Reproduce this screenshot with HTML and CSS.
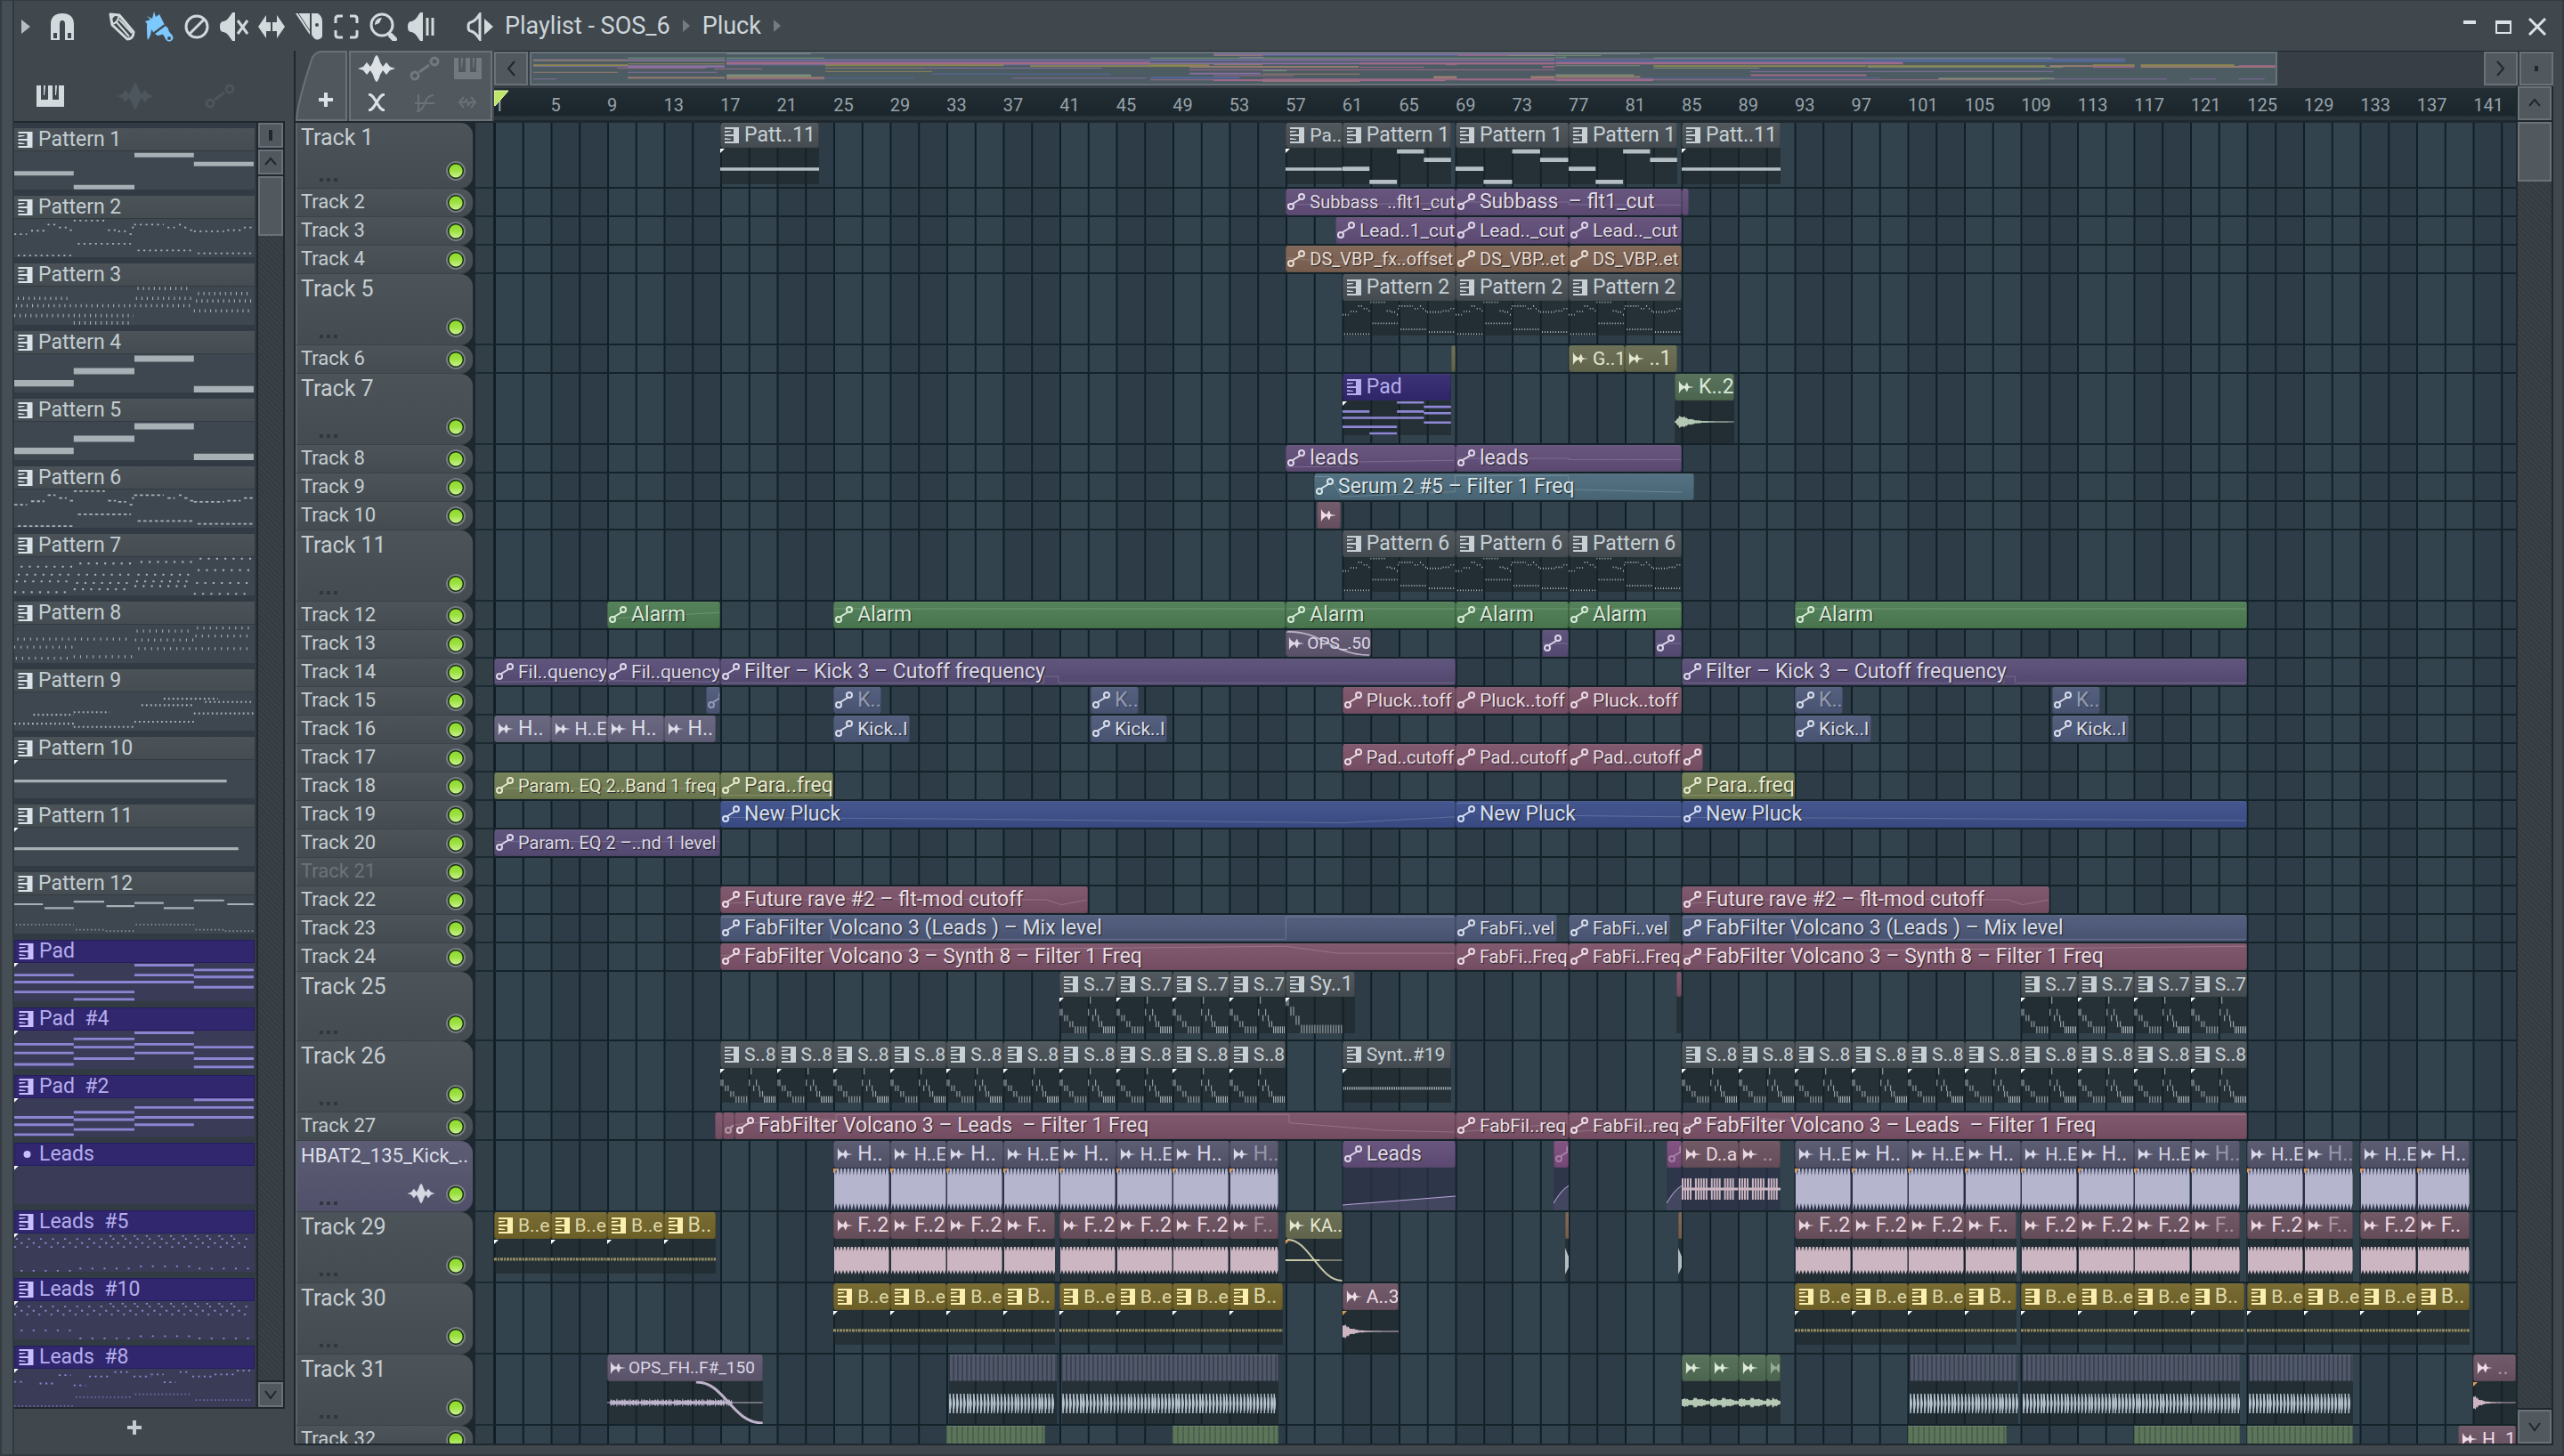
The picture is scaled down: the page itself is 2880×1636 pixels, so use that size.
FILE: index.html
```html
<!DOCTYPE html>
<html lang="en">
<head>
<meta charset="utf-8">
<title>Playlist - SOS_6</title>
<meta name="viewport" content="width=device-width, initial-scale=1">
<link rel="stylesheet" href="styles.css">
</head>
<body>
<svg class="symbols" aria-hidden="true">
  <symbol id="i-pattern" viewBox="0 0 16 18"><path d="M0 0H16V18H0V16H10V10H0V8H10V2H0ZM0 4H7V5L0 6ZM0 14H7V13L0 12Z"/></symbol>
  <symbol id="i-auto" viewBox="0 0 20 20"><g fill="none" stroke="currentColor" stroke-width="2"><circle cx="4" cy="15" r="3"/><circle cx="16" cy="4" r="3"/><path d="M6 12L14 7"/></g></symbol>
  <symbol id="i-audio" viewBox="0 0 20 18"><path d="M1 1Q3 6 8 8L11 3L13 8L20 9L13 10L11 15L8 10Q3 12 1 17Z"/></symbol>
  <symbol id="i-dot" viewBox="0 0 16 18"><circle cx="9" cy="9" r="4"/></symbol>
  <symbol id="i-wave" viewBox="0 0 42 30"><path d="M0 15L6 13L10 8L14 13L17 8C18 4 20 0 21 0S24 4 25 8L28 13L32 8L36 13L42 15L36 17L32 22L28 17L25 22C24 26 22 30 21 30S18 26 17 22L14 17L10 22L6 17Z"/></symbol>
  <symbol id="i-node" viewBox="0 0 34 28"><g fill="none" stroke="currentColor" stroke-width="3"><circle cx="6" cy="22" r="4"/><circle cx="28" cy="6" r="4"/></g><path d="M11 18L22 10" stroke="currentColor" stroke-width="3"/></symbol>
  <symbol id="i-piano" viewBox="0 0 31 24"><path d="M0 0H5V16H13V0H18V16H25V0H31V24H0ZM8 0H10L9 11H8ZM21 0H23L22 11H21Z"/></symbol>
  <symbol id="i-up" viewBox="0 0 20 20"><path d="M4 13L10 6L16 13" fill="none" stroke="currentColor" stroke-width="2"/></symbol>
  <symbol id="i-down" viewBox="0 0 20 20"><path d="M4 6L10 14L16 6" fill="none" stroke="currentColor" stroke-width="2"/></symbol>
</svg>

<div class="window">
  <header class="titlebar">
    <button class="tool tool-menu" aria-label="Menu"><svg width="10" height="16" viewBox="0 0 10 16"><path d="M0 0L10 8L0 16Z" fill="currentColor"/></svg></button>
    <button class="tool tool-snap" aria-label="Snap"><svg width="28" height="30" viewBox="0 0 28 30"><path d="M1 30V12C1 4 6 0 14 0S27 4 27 12V30H17V13C17 9 16 8 14 8S11 9 11 13V30Z" fill="currentColor"/><path d="M4 22H8V28H4ZM20 22H24V28H20Z" fill="#40484e"/></svg></button>
    <button class="tool" aria-label="Draw"><svg width="30" height="32" viewBox="0 0 30 32"><g fill="none" stroke="currentColor" stroke-width="3" stroke-linejoin="round"><path d="M2 2L12 3L28 22C28 27 25 30 21 30L4 14Z"/><path d="M4 13C9 12 11 9 12 3M9 11L23 27M12 8L26 23" stroke-width="2"/></g><path d="M2 2L8 3L3 8Z" fill="currentColor"/></svg></button>
    <button class="tool tool-active" aria-label="Paint"><svg width="32" height="34" viewBox="0 0 32 34"><path d="M10 0L12 6L16 3L22 15L10 24L0 11L6 9L2 5L8 8ZM11 25L23 16L26 19C26 22 28 24 30 26C34 31 29 35 25 33C22 31 22 27 20 26C18 25 17 27 14 27ZM2 14L7 19C7 24 6 28 3 32C2 28 2 20 2 14Z" fill="currentColor"/><circle cx="27" cy="30" r="2" fill="#40484e"/><path d="M10 24L22 15" stroke="#40484e" stroke-width="2"/></svg></button>
    <button class="tool" aria-label="Delete"><svg width="28" height="28" viewBox="0 0 28 28"><g fill="none" stroke="currentColor" stroke-width="3"><circle cx="14" cy="14" r="12"/><path d="M6 22L22 6"/></g></svg></button>
    <button class="tool" aria-label="Mute"><svg width="32" height="32" viewBox="0 0 32 32"><path d="M0 16C0 13 1 10 4 10C9 9 11 4 14 0H17V32H14C11 28 9 23 4 22C1 22 0 19 0 16Z" fill="currentColor"/><path d="M20 9L31 24M31 9L20 24" stroke="currentColor" stroke-width="3"/></svg></button>
    <button class="tool" aria-label="Slip"><svg width="30" height="26" viewBox="0 0 30 26"><path d="M0 13L9 0V8H14V18H9V26ZM30 13L21 0V8H16V18H21V26Z" fill="currentColor"/></svg></button>
    <button class="tool" aria-label="Slice"><svg width="30" height="30" viewBox="0 0 30 30"><path d="M0 0H16V24ZM18 0H25C28 2 30 5 30 9V26C28 30 23 31 20 27L18 24Z" fill="currentColor"/><path d="M3 0L17 21" stroke="#40484e" stroke-width="1"/><circle cx="24" cy="13" r="2" fill="#40484e"/></svg></button>
    <button class="tool" aria-label="Select"><svg width="28" height="28" viewBox="0 0 28 28"><path d="M2 10V5Q2 2 5 2H10M18 2H23Q26 2 26 5V10M26 18V23Q26 26 23 26H18M10 26H5Q2 26 2 23V18" fill="none" stroke="currentColor" stroke-width="3"/></svg></button>
    <button class="tool" aria-label="Zoom"><svg width="32" height="32" viewBox="0 0 32 32"><circle cx="14" cy="14" r="12" fill="none" stroke="currentColor" stroke-width="3"/><path d="M6 14C6 9 9 6 14 6L11 12Z" fill="currentColor"/><path d="M24 26L28 30" stroke="currentColor" stroke-width="6" stroke-linecap="round"/></svg></button>
    <button class="tool" aria-label="Playback"><svg width="30" height="32" viewBox="0 0 30 32"><path d="M0 16C0 13 1 10 4 10C9 9 11 4 14 0H17V32H14C11 28 9 23 4 22C1 22 0 19 0 16Z" fill="currentColor"/><path d="M22 6V26M28 6V26" stroke="currentColor" stroke-width="3"/></svg></button>
    <button class="tool tool-out" aria-label="Audition"><svg width="30" height="32" viewBox="0 0 30 32"><path d="M2 16C2 12 3 11 5 11C10 10 12 6 15 2V30C12 26 10 22 5 21C3 21 2 20 2 16Z" fill="none" stroke="currentColor" stroke-width="3"/><path d="M20 7L30 16L20 25Z" fill="currentColor"/></svg></button>
    <nav class="crumbs" aria-label="Location">
      <a href="#playlist">Playlist - SOS_6</a><i class="crumb-sep"></i><a href="#pluck">Pluck</a><i class="crumb-sep"></i>
    </nav>
    <div class="window-controls">
      <button class="win" aria-label="Minimize"><svg width="20" height="20" viewBox="0 0 20 20"><path d="M3 3H17V7H3Z" fill="currentColor"/></svg></button>
      <button class="win" aria-label="Maximize"><svg width="20" height="20" viewBox="0 0 20 20"><path d="M1 3H19V18H1ZM3 7V16H17V7Z" fill="currentColor" fill-rule="evenodd"/></svg></button>
      <button class="win" aria-label="Close"><svg width="20" height="20" viewBox="0 0 20 20"><path d="M1 1L19 19M19 1L1 19" stroke="currentColor" stroke-width="3"/></svg></button>
    </div>
  </header>

  <main class="workspace" id="playlist">
    <aside class="picker">
      <div class="picker-tabs">
        <button class="picker-tab is-on" aria-label="Patterns"><svg width="31" height="24"><use href="#i-piano"/></svg></button>
        <button class="picker-tab" aria-label="Audio clips"><svg width="42" height="30"><use href="#i-wave"/></svg></button>
        <button class="picker-tab" aria-label="Automation"><svg width="34" height="28"><use href="#i-node"/></svg></button>
      </div>
      <div class="picker-box">
        <ul class="pattern-list" id="patterns"></ul>
        <div class="scroll">
          <button class="scroll-btn scroll-mark" aria-label="Resize"></button>
          <button class="scroll-btn" aria-label="Scroll up"><svg width="20" height="20"><use href="#i-up"/></svg></button>
          <div class="scroll-track"><div class="scroll-thumb"></div></div>
          <button class="scroll-btn" aria-label="Scroll down"><svg width="20" height="20"><use href="#i-down"/></svg></button>
        </div>
      </div>
      <button class="picker-add" aria-label="Add pattern"><svg width="16" height="16" viewBox="0 0 16 16"><path d="M6 0H10V6H16V10H10V16H6V10H0V6H6Z" fill="currentColor"/></svg></button>
    </aside>

    <section class="playlist">
      <div class="corner">
        <div class="add-tab">
          <svg class="add-shape" viewBox="0 0 58 78" preserveAspectRatio="none"><path d="M1 77C2 60 12 28 18 10Q21 1 30 1H57V77Z" fill="#50585e" stroke="#6a7278" stroke-width="2"/></svg>
          <button class="add-track" aria-label="Add track"><svg width="16" height="16" viewBox="0 0 16 16"><path d="M6 0H10V6H16V10H10V16H6V10H0V6H6Z" fill="currentColor"/></svg></button>
        </div>
        <div class="modes">
          <button class="mode is-on" aria-label="Audio"><svg width="42" height="30"><use href="#i-wave"/></svg></button>
          <button class="mode" aria-label="Automation"><svg width="34" height="28"><use href="#i-node"/></svg></button>
          <button class="mode" aria-label="Patterns"><svg width="31" height="24"><use href="#i-piano"/></svg></button>
          <button class="mode is-on" aria-label="Crossfade"><svg width="20" height="20" viewBox="0 0 20 20"><path d="M1 1C5 1 7 5 10 10S15 19 19 19M19 1C15 1 13 5 10 10S5 19 1 19" fill="none" stroke="currentColor" stroke-width="3"/></svg></button>
          <button class="mode faint" aria-label="Curve"><svg width="22" height="22" viewBox="0 0 22 22"><path d="M4 2V22M0 12H22M2 21C14 20 8 4 21 3" fill="none" stroke="currentColor" stroke-width="2"/></svg></button>
          <button class="mode faint" aria-label="Stretch"><svg width="22" height="16" viewBox="0 0 22 16"><path d="M7 2L2 8L7 14M15 2L20 8L15 14M4 8H8L10 5L12 11L14 8H18" fill="none" stroke="currentColor" stroke-width="2"/></svg></button>
        </div>
      </div>

      <div class="overview">
        <button class="scroll-btn nav-btn" aria-label="Scroll left"><svg width="12" height="20" viewBox="0 0 12 20"><path d="M10 2L3 10L10 18" fill="none" stroke="currentColor" stroke-width="2"/></svg></button>
        <div class="overview-track"><svg class="minimap" id="minimap" viewBox="0 0 1958 36" preserveAspectRatio="none"></svg><div class="overview-rest"></div></div>
        <button class="scroll-btn nav-btn" aria-label="Scroll right"><svg width="12" height="20" viewBox="0 0 12 20"><path d="M2 2L9 10L2 18" fill="none" stroke="currentColor" stroke-width="2"/></svg></button>
        <button class="scroll-btn nav-btn scroll-mark small" aria-label="Resize"></button>
      </div>
      <div class="ruler" id="ruler"></div>

      <div class="tracks" id="tracks"></div>

      <div class="scroll scroll-main">
        <button class="scroll-btn" aria-label="Scroll up"><svg width="20" height="20"><use href="#i-up"/></svg></button>
        <div class="scroll-track"><div class="scroll-thumb"></div></div>
        <button class="scroll-btn" aria-label="Scroll down"><svg width="20" height="20"><use href="#i-down"/></svg></button>
      </div>
    </section>
  </main>
</div>
<script src="script.js"></script>
</body>
</html>
```

FILE: styles.css
```css
:root {
  --panel: #40484e;
  --edge: #1f282e;
  --btn: #51595f;
  --btn-edge: #6a7278;
  --text: #cdd5d9;
}
* { box-sizing: border-box; }
body {
  margin: 0;
  background: var(--panel);
  color: var(--text);
  font-family: Roboto, "Liberation Sans", sans-serif;
  font-size: 20px;
}
button {
  margin: 0;
  padding: 0;
  border: 0;
  background: none;
  color: inherit;
  font: inherit;
  display: flex;
  align-items: center;
  justify-content: center;
}
svg { display: block; }
.symbols { position: absolute; width: 0; height: 0; }
symbol { overflow: visible; }
use { fill: currentColor; }

.window {
  height: 100vh;
  display: flex;
  flex-direction: column;
  padding: 2px 10px 10px 14px;
  border: 2px solid #343b41;
  border-top-width: 1px;
  background: var(--panel);
  overflow: hidden;
  background-image: linear-gradient(90deg, #464e55 12px, #30383e 12px, #30383e 14px, transparent 14px);
}

/* title bar */
.titlebar { display: flex; align-items: center; flex: none; height: 54px; }
.tool { width: 42px; height: 42px; color: #d3dadd; }
.tool-menu { width: 26px; margin-right: 7px; color: #b6bcc0; }
.tool-snap { margin-right: 25px; }
.tool-out { margin-left: 24px; }
.tool-active { color: #7cc8ff; }
.crumbs { display: flex; align-items: center; gap: 14px; padding: 0 0 2px 7px; font-size: 27px; line-height: 30px; }
.crumbs a { color: var(--text); text-decoration: none; }
.crumb-sep { border-left: 8px solid #747c81; border-top: 7px solid transparent; border-bottom: 7px solid transparent; }
.window-controls { display: flex; gap: 18px; margin-left: auto; padding-right: 8px; }
.win { width: 20px; height: 20px; color: #dbe1e4; }

.workspace { flex: 1; min-height: 0; display: flex; gap: 10px; }

/* pattern picker */
.picker { width: 304px; flex: none; display: flex; flex-direction: column; }
.picker-tabs { height: 79px; flex: none; display: flex; align-items: flex-end; padding: 0 0 7px 0; }
.picker-tab { width: 81px; height: 42px; color: #4d565c; }
.picker-tab:nth-child(2) { width: 109px; }
.picker-tab.is-on { color: #d3dadd; }
.picker-box { flex: 1; min-height: 0; display: flex; border-top: 2px solid var(--edge); border-bottom: 2px solid var(--edge); background: #323b43; }
.pattern-list { flex: 1; min-width: 0; margin: 0; padding: 6px 2px 0 0; list-style: none; overflow: hidden; display: flex; flex-direction: column; gap: 7px; }
.pattern { flex: none; height: 69px; }
.pattern-name { height: 26px; display: flex; align-items: center; gap: 6px; padding-left: 4px; background: linear-gradient(#4b5359, #454d52); color: #c3cdd2; font-size: 23px; line-height: 24px; white-space: pre; border-bottom: 1px solid #333b41; }
.pattern-name svg { color: #d8e4ea; }
.pattern-notes { display: block; width: 100%; height: 43px; background: #3e474f; color: #a6b0b5; }
.pattern.violet .pattern-name { background: #31276f; color: #b5adec; border: 1px solid #251d60; }
.pattern.violet .pattern-name svg { color: #c8bdff; }
.pattern.violet .pattern-notes { background: #3a3c57; color: #8d83d3; }
.picker-add { height: 41px; flex: none; padding-right: 34px; color: #c5ccd0; }

/* scroll bars */
.scroll { width: 32px; flex: none; display: flex; flex-direction: column; gap: 2px; border-left: 2px solid var(--edge); border-right: 2px solid var(--edge); background: var(--edge); }
.scroll-btn { flex: none; height: 28px; background: var(--btn); border: 2px solid var(--btn-edge); color: #1f282e; }
.scroll-track { flex: 1; min-height: 0; background: repeating-linear-gradient(45deg, #343b41 0 2px, #3a4147 2px 4px); }
.scroll-thumb { height: 67px; background: var(--btn); border: 2px solid var(--btn-edge); }
.scroll-mark::before { content: ""; width: 4px; height: 12px; background: #1f282e; }
.scroll-mark.small::before { height: 6px; }

/* playlist */
.playlist {
  flex: 1;
  min-width: 0;
  display: grid;
  grid-template-columns: 223px 1fr 42px;
  grid-template-rows: 40px 40px minmax(0, 1fr);
  border-left: 2px solid var(--edge);
  border-bottom: 2px solid var(--edge);
}
.corner { grid-row: 1 / 3; display: flex; gap: 2px; padding-right: 2px; background: var(--panel); border-bottom: 1px solid var(--edge); }
.add-tab { position: relative; width: 58px; height: 79px; }
.add-shape { width: 58px; height: 79px; }
.add-track { position: absolute; left: 14px; bottom: 0; width: 40px; height: 48px; color: #dbe1e4; }
.modes { flex: 1; display: grid; grid-template-columns: 58px 50px 46px; grid-template-rows: 36px 39px; background: var(--btn); border: 2px solid var(--btn-edge); }
.mode { color: #727a80; }
.mode.is-on { color: #dbe1e4; }
.mode.faint { color: #6a7278; }
.overview { grid-column: 2 / 4; display: flex; gap: 2px; background: #373e45; border-top: 1px solid var(--edge); }
.nav-btn { width: 38px; height: 38px; }
.overview-track { flex: 1; min-width: 0; display: flex; background: #373e45; }
.minimap { flex: 17; min-width: 0; height: 38px; background: #4d5c63; border: 2px solid #687379; }
.overview-rest { flex: 2; }
.ruler { position: relative; overflow: hidden; background: linear-gradient(#222d34, #1b262c 85%, #2a363d 90%); border-top: 2px solid #373e45; border-bottom: 2px solid var(--edge); }
.ruler span { position: absolute; top: 7px; color: #97a2a8; font-size: 20px; line-height: 24px; }
.ruler .playhead { position: absolute; left: 0; top: 2px; width: 18px; height: 18px; }
.tracks { grid-column: 1 / 3; min-height: 0; overflow: hidden; border-top: 1px solid var(--edge); }
.scroll-main { grid-column: 3; grid-row: 2 / 4; width: 42px; }
.scroll-main .scroll-btn { height: 38px; }

.track { display: grid; grid-template-columns: 202px 21px 1fr; background: #1d282e; }
.track-head { position: relative; width: 199px; padding-left: 4px; border-left: 2px solid #5b6369; border-radius: 0 14px 14px 0; background: linear-gradient(#4c5459, #444c52); border-bottom: 1px solid #3b4348; font-size: 22px; line-height: 30px; color: #c6cdd1; white-space: pre; }
.track-head.tall { font-size: 25px; line-height: 34px; }
.track-head.tight { font-size: 22px; color: #dcdfe8; background: linear-gradient(#5c5c74, #50506a); }
.track-head.off label { color: #6c7479; }
.led { appearance: none; position: absolute; right: 8px; bottom: 4px; width: 22px; height: 22px; margin: 0; border-radius: 50%; border: 2px solid #767e82; background: radial-gradient(circle, transparent 7px, #13290c 8px), linear-gradient(#8ad92c, #9be03e 45%, #d2f5a0); }
.tall .led { bottom: 8px; }
.more { position: absolute; left: 25px; bottom: 7px; display: flex; gap: 4px; }
.more i { width: 4px; height: 4px; background: #30383d; }
.head-wave { position: absolute; right: 42px; bottom: 9px; color: #d4d6e0; }
.lead-in { background: #323f47; border-bottom: 2px solid #1b2930; border-right: 1px solid #14232b; }
.lane {
  position: relative;
  overflow: hidden;
  background-image:
    linear-gradient(transparent calc(100% - 2px), #14222a calc(100% - 2px)),
    linear-gradient(90deg, #0f1f28 2px, transparent 2px),
    linear-gradient(90deg, #33434d 50%, #2d3c46 50%);
  background-size: 100% 100%, calc(200% / 143) 100%, calc(800% / 143) 100%;
}

/* clips */
.clip { position: absolute; top: 0; bottom: 2px; display: flex; flex-direction: column; overflow: hidden; --c: #495055; --t: #c6d0d5; --w: #b4bec3; }
.clip-head { position: relative; flex: none; height: 30px; display: flex; align-items: center; gap: 5px; padding-left: 3px; border-radius: 3px; background: linear-gradient(rgba(255,255,255,.05), rgba(0,0,0,.05)), var(--c); border: 1px solid rgba(0,0,0,.18); border-top-color: rgba(255,255,255,.1); color: var(--t); font-size: 20px; line-height: 26px; white-space: pre; overflow: hidden; }
.clip.wide .clip-head { font-size: 23px; }
.clip.medium .clip-head { font-size: 21px; }
.clip.narrow .clip-head { font-size: 19px; gap: 3px; padding-left: 2px; }
.short .clip-head { height: 28px; }
.clip-head svg.icon { flex: none; width: 18px; height: 18px; }
.clip.auto svg.icon { width: 20px; height: 20px; margin-left: -2px; }
.clip.auto .clip-head { text-shadow: 1px 1px 1px #1e242a; }
.clip-head span { position: relative; }
.clip.dim span, .clip.dim .icon:last-child { opacity: .5; }
.curve { position: absolute; left: 0; top: 0; width: 100%; height: 100%; opacity: .22; }
.curve.fade { opacity: .7; }
.clip-body { position: relative; flex: 1; min-height: 0; background: rgba(28,34,38,.55); color: var(--w); }
.clip-body svg { width: 100%; height: 100%; }
.clip-body::before { content: ""; position: absolute; left: 0; top: 1px; border-top: 5px solid #fff; border-right: 5px solid transparent; z-index: 1; }
.clip.audio .clip-body::before { border-top-color: #e09a55; }
.clip.plain .clip-body::before { display: none; }

.violet { --c: #31286f; --t: #b5adec; --w: #8f86d6; }
.purple { --c: #604d78; --t: #e0d8ea; }
.plum { --c: #574c75; --t: #dcd8ec; }
.brown { --c: #7b6151; --t: #e8dcd2; }
.moss { --c: #64694f; --t: #e4e6d0; --w: #c8c8a8; }
.fern { --c: #4f6a52; --t: #dbe8da; --w: #b4c8b4; }
.green { --c: #4c7b52; --t: #d8ecd8; }
.teal { --c: #4c6a7b; --t: #d8e6ec; }
.mauve { --c: #6a5262; --t: #ecdce6; --w: #cdb6c2; }
.rose { --c: #7a5167; --t: #ecdce4; }
.blue { --c: #3b4e88; --t: #d4def4; }
.slate { --c: #4c5778; --t: #d8deec; }
.olive { --c: #6f7b50; --t: #e6eacc; }
.gold { --c: #716429; --t: #ddd6a6; --w: #938d64; }
.gold svg.icon { color: #fdf0ae; }
.ash { --c: #62617a; --t: #dcdce8; }
.lilac { --c: #53536c; --t: #d8d8e8; --w: #b5b5ce; }
.pink { --c: #6a505e; --t: #ead8e0; --w: #ccb6c1; }
.heather { --c: #5f566f; --t: #dcd6e6; --w: #beb4cc; }
.orchid { --c: #7a4b7a; --t: #d0b4d4; --w: #c8a4cc; }
.lilac .clip-body, .tint .clip-body { background: rgba(46,50,74,.75); }
.tint { --w: #b8a6d8; }
.pink.tint { --w: #ccb6c1; }
.beats { --w: #b6c4d0; }
.beats .clip-head { border-radius: 0; background: repeating-linear-gradient(90deg, #525869 0 3px, #3a4553 3px 5px); }
.greens .clip-head { border-radius: 0; background: repeating-linear-gradient(90deg, #5d7659 0 4px, #4b6250 4px 6px); }
```

FILE: script.js
```js
const BARS = 143;

/* ---- note drawings: [x1, x2, y] segments in a 756 x 120 box ---- */
const cols = [[0, 187], [187, 378], [378, 565], [565, 753]];
const chords = rows => rows.flatMap((ys, i) => ys.map(y => [...cols[i], y]));
const melody = [[0,40,48],[53,95,37],[105,130,18],[141,165,27],[175,187,35],[187,285,5],[295,320,35],[327,352,39],[363,372,48],[370,377,27],[377,470,18],[482,505,27],[518,526,18],[535,545,27],[553,563,35],[565,660,39],[670,712,35],[722,753,27],[11,187,115],[200,367,78],[388,565,99],[577,753,108]];
const leadTop = [[5,750,17],[20,740,30],[0,750,42],[300,690,8]];
const notes = {
  steps1: { h: 14, s: chords([[69],[112],[12],[40]]) },
  steps4: { h: 20, s: chords([[91],[53],[14],[110]]) },
  melody: { h: 5, d: '6 12', s: melody },
  melody6: { h: 5, d: '10 8', s: melody },
  ticks3: { h: 10, d: '3 14', s: [[11,175,37],[5,555,60],[0,375,91],[187,370,114],[388,552,6],[383,563,37],[578,740,22],[572,750,45],[565,740,76]] },
  dots7: { h: 6, d: '6 20', s: [[20,187,30],[11,187,55],[5,187,76],[0,172,110],[205,378,20],[200,378,55],[195,375,81],[187,360,101],[397,565,15],[388,565,55],[383,555,76],[378,550,91],[583,753,5],[577,745,41],[572,745,81],[565,735,115]] },
  ticks8: { h: 9, d: '3 17', s: [[10,370,45],[0,187,70],[187,378,100],[5,180,105],[385,560,20],[380,565,48],[390,750,75],[570,750,35],[575,745,10]] },
  dots9: { h: 6, d: '5 9', s: [[0,187,98],[60,187,70],[187,300,62],[187,378,108],[378,565,92],[400,565,40],[470,640,20],[565,753,66],[600,753,30]] },
  line10: { h: 9, s: [[0,668,66]] },
  line11: { h: 9, s: [[0,705,66]] },
  phrase: { h: 6, s: [[0,90,28],[95,187,40],[187,283,20],[290,378,34],[378,470,24],[470,565,40],[565,660,16],[670,753,28]], s2: [[5,187,92],[193,283,108],[288,378,112],[382,565,92],[570,660,108],[663,753,112]] },
  pad: { h: 8, s: chords([[38,60,91],[60,91,114],[7,38,60],[22,44,76]]) },
  pad4: { h: 8, s: chords([[43,70,106],[26,52,88],[7,43,70],[52,88,114]]) },
  pad2: { h: 8, s: chords([[60,83,114],[44,67,98],[29,60,83],[5,29,60]]) },
  none: { h: 1, s: [] },
  leads5: { h: 5, d: '6 32', s: [...leadTop,[20,187,117],[205,378,110],[395,565,103],[580,753,110]] },
  leads10: { h: 5, d: '6 32', s: [...leadTop,[20,187,92],[205,378,117],[395,565,110],[580,753,117]] },
  leads8: { h: 5, d: '6 12', s: [[0,35,41],[80,130,46],[140,178,20],[187,225,52],[235,300,24],[315,365,10],[375,430,24],[430,470,18],[470,508,42],[520,550,10],[560,620,24],[630,690,18],[700,745,6]], s2: [[0,185,117],[193,368,89],[380,560,80],[570,745,98]] }
};

function notesSvg(key, cls) {
  const n = notes[key];
  const path = s => s.map(([a, b, y]) => `M${a} ${y}H${b}`).join('');
  const second = n.s2 ? `<path d="${path(n.s2)}" stroke="currentColor" stroke-width="5" stroke-dasharray="4 8" opacity=".7"/>` : '';
  const corner = cls === 'marked' ? '<path d="M0 0H13L0 13Z" fill="#fff"/>' : '';
  return `<svg class="${cls ? 'pattern-notes' : ''}" viewBox="0 0 756 120" preserveAspectRatio="none"><path d="${path(n.s)}" fill="none" stroke="currentColor" stroke-width="${n.h}" ${n.d ? `stroke-dasharray="${n.d}"` : ''}/>${second}${corner}</svg>`;
}

/* ---- pattern picker ---- */
const patterns = [
  ['Pattern 1','steps1'],['Pattern 2','melody'],['Pattern 3','ticks3'],['Pattern 4','steps4'],['Pattern 5','steps4'],
  ['Pattern 6','melody6'],['Pattern 7','dots7'],['Pattern 8','ticks8'],['Pattern 9','dots9'],['Pattern 10','line10'],
  ['Pattern 11','line11'],['Pattern 12','phrase'],
  ['Pad','pad',1],['Pad  #4','pad4',1],['Pad  #2','pad2',1],['Leads','none',1],['Leads  #5','leads5',1],['Leads  #10','leads10',1],['Leads  #8','leads8',1]
];
document.getElementById('patterns').innerHTML = patterns.map(([name, key, violet]) =>
  `<li class="pattern ${violet ? 'violet' : ''}"><div class="pattern-name"><svg width="17" height="18"><use href="#i-${key === 'none' ? 'dot' : 'pattern'}"/></svg>${name}</div>${notesSvg(key, violet || key.startsWith('line') ? 'marked' : 'plain')}</li>`).join('');

/* ---- clip bodies ---- */
const svgBox = (w, h, inner) => `<svg viewBox="0 0 ${w} ${h}" preserveAspectRatio="none">${inner}</svg>`;

function teeth(bars, top, bottom, depth) {
  const w = bars * 16;
  let up = `M0 ${bottom}`, down = '';
  for (let x = 0; x < w; x += 4) {
    up += `L${x} ${top}L${x + 2} ${top}L${x + 3} ${top + depth}`;
    down = `L${x + 3} ${bottom - depth}L${x + 1} ${bottom}` + down;
  }
  return svgBox(w, 48, `<path d="${up}${down}Z" fill="currentColor"/><path d="M0 0V48" stroke="#2b3340" stroke-width="2"/>`);
}
function shape(w, env) {
  let a = '', b = '';
  for (let x = 0; x <= w; x++) {
    const v = env(x / w, x);
    a += `L${x} ${24 - v}`;
    b = `L${x} ${24 + v}` + b;
  }
  return `<path d="M0 24${a}${b}Z" fill="currentColor"/><path d="M0 24H${w}" stroke="currentColor"/>`;
}
const jitter = x => 0.6 + 0.4 * Math.abs(Math.sin(x * 12.9) * Math.cos(x * 4.1));
function ticks(list) {
  return list.map(([x, y, h]) => `M${x} ${y}V${y + h}`).join('');
}
const arp = [[1,16,9],[3,16,9],[6,24,8],[9,24,8],[12,32,8],[15,32,8],[18,39,9],[21,39,9],[24,39,9],[27,39,9],[30,39,9],[35,0,9],[33,16,9],[41,16,9],[38,24,8],[44,24,8],[45,32,8],[48,32,8],[50,39,9],[52,39,9],[54,39,9],[56,39,9],[58,39,9],[60,39,9],[62,39,9]];
const fall = [[1,2,10],[3,2,10],[6,13,12],[9,13,12],[12,25,12],[15,25,12]];
for (let x = 18; x < 64; x += 3) fall.push([x, 37, 11]);

/* spindle-shaped drum hits */
function spindles(bars) {
  let d = '';
  for (let x = 1, i = 0; x < bars * 16 - 2; x += i % 7 === 5 ? 3 : 4, i++) {
    d += `M${x} 14Q${x + 3} 25 ${x} 36Q${x - 1} 25 ${x} 14Z`;
  }
  return svgBox(bars * 16, 48, `<path d="${d}" fill="currentColor" stroke="currentColor" stroke-width="1"/>`);
}
function drumHits(bars) {
  let d = '';
  for (let x = 1; x < bars * 16; x += 3) {
    if (x % 16 < 13) d += `M${x} 12V36`;
  }
  return svgBox(bars * 16, 48, `<path d="${d}" stroke="currentColor" stroke-width="2"/><path d="M0 24H${bars * 16}" stroke="currentColor" stroke-width="3"/>`);
}

const bodies = {
  steps: () => notesSvg('steps1', ''),
  line: () => svgBox(100, 48, '<path d="M0 28H100" stroke="currentColor" stroke-width="4"/>'),
  mel: () => notesSvg('melody', ''),
  pad: () => notesSvg('pad', ''),
  arp: () => svgBox(64, 48, `<path d="${ticks(arp)}" stroke="currentColor"/>`),
  fall: () => svgBox(78, 48, `<path d="${ticks(fall)}" stroke="currentColor"/>`),
  roll: () => svgBox(120, 48, '<path d="M1 28H120" stroke="currentColor" stroke-width="4" stroke-dasharray="1 1"/>'),
  bass: b => svgBox(b * 16, 48, `<path d="M0 28H${b * 16}" stroke="currentColor" stroke-width="4" stroke-dasharray="3 1 2 1"/>`),
  kick: b => teeth(b, 1, 48, 8),
  clap: b => teeth(b, 9, 40, 5),
  decay: () => svgBox(80, 48, shape(80, (t, x) => (t < 0.1 ? t * 90 : 9 * Math.exp(-(t - .1) * 5)) * jitter(x))),
  hit: () => svgBox(64, 48, shape(64, (t, x) => 11 * Math.exp(-t * 6) * jitter(x))),
  hum: () => svgBox(175, 48, shape(175, (t, x) => t < .02 || t > .8 ? 0 : 1 + 4 * Math.abs(Math.sin(x * 7.3) * Math.cos(x * 1.7))) + '<path d="M100 1C132 0 140 47 175 47" fill="none" stroke="currentColor" stroke-width="3"/>'),
  fade: () => svgBox(64, 48, shape(64, t => t < .6 ? 1 : 0) + '<path d="M2 1C26 0 38 47 64 47" fill="none" stroke="currentColor" stroke-width="2"/>'),
  ramp: () => svgBox(100, 48, '<path d="M0 42L100 32V48H0Z" fill="currentColor" opacity=".15"/><path d="M0 42L100 32" stroke="currentColor" stroke-width="1"/>'),
  rise: () => svgBox(16, 48, '<path d="M0 40Q8 25 16 20V48H0Z" fill="currentColor" opacity=".15"/><path d="M0 40Q8 25 16 20" fill="none" stroke="currentColor"/>'),
  drums: drumHits,
  loop: () => svgBox(32, 48, shape(32, (t, x) => (x < 14 ? 6 * (1 - t) : 8 * (1.3 - t)) * jitter(x))),
  hats: spindles,
  nub: () => svgBox(4, 48, '<path d="M0 10L4 20V32L0 40Z" fill="currentColor"/>'),
  blank: () => ''
};

/* ---- clips: [kind, colour, first bar, end bar, label, body, automation curve] ---- */
const run = (kind, colour, starts, label, body, len = 4) => starts.map(s => [kind, colour, s, s + len, label, body]);
const P = 'pattern', A = 'auto', W = 'audio';
const kicks = [25,29,33,37,41,45,49,93,97,101,105,109,113,117,125,133];
const tracks = [
  ['Track 1', 74, [[P,'gray',17,24,'Patt..11','line'],[P,'gray',57,61,'Pa..','line'],[P,'gray plain',61,68.7,'Pattern 1','steps'],[P,'gray plain',69,77,'Pattern 1','steps'],[P,'gray plain',77,84.7,'Pattern 1','steps'],[P,'gray',85,92,'Patt..11','line']]],
  ['Track 2', 32, [[A,'purple',57,69,'Subbass  ..flt1_cut','','0,60 100,55'],[A,'purple',69,85,'Subbass  – flt1_cut','','0,50 50,50 50,60 100,62'],[A,'purple',85,85.5,'']]],
  ['Track 3', 32, [[A,'purple',60.5,69,'Lead..1_cut'],[A,'purple',69,77,'Lead.._cut'],[A,'purple',77,85,'Lead.._cut']]],
  ['Track 4', 32, [[A,'brown',57,69,'DS_VBP_fx..offset','','0,45 30,65 100,45'],[A,'brown',69,77,'DS_VBP..et'],[A,'brown',77,85,'DS_VBP..et']]],
  ['Track 5', 80, run(P,'gray plain',[61,69,77],'Pattern 2','mel',8)],
  ['Track 6', 32, [[W,'moss',68.7,69,''],[W,'moss',77,81,'G..1'],[W,'moss',81,84.7,'..1']]],
  ['Track 7', 80, [[P,'violet',61,68.7,'Pad','pad'],[W,'fern plain',84.5,88.7,'K..2','decay']]],
  ['Track 8', 32, [[A,'purple',57,69,'leads','','0,85 33,82 33,65 100,58'],[A,'purple',69,85,'leads','','0,50 50,50 50,55 100,55']]],
  ['Track 9', 32, [[A,'teal',59,85.9,'Serum 2 #5 – Filter 1 Freq','','0,8 4,10 7,90 37,70 37,5 67,5 67,60 97,72']]],
  ['Track 10', 32, [[W,'mauve',59.2,60.9,'']]],
  ['Track 11', 80, run(P,'gray plain',[61,69,77],'Pattern 6','mel',8)],
  ['Track 12', 32, [[A,'green',9,17,'Alarm','','0,65 100,40'],[A,'green',25,57,'Alarm','','0,25 100,25'],[A,'green',57,69,'Alarm','','0,25 100,25'],[A,'green',69,77,'Alarm','','0,25 100,25'],[A,'green',77,85,'Alarm','','0,25 100,25'],[A,'green',93,125,'Alarm','','0,25 100,25']]],
  ['Track 13', 32, [[W,'heather',57,63,'OPS_.50','','fade'],[A,'plum',75.1,77,'','','0,50 100,50'],[A,'plum',83.1,85,'','','0,50 100,50']]],
  ['Track 14', 32, [[A,'plum',1,9,'Fil..quency','','0,90 100,85'],[A,'plum',9,17,'Fil..quency','','0,85 100,90'],[A,'plum',17,69,'Filter – Kick 3 – Cutoff frequency','','0,94 44,94 44,68 46,68 46,94 100,94'],[A,'plum',85,125,'Filter – Kick 3 – Cutoff frequency','','0,94 57,94 57,68 59,68 59,94 100,94']]],
  ['Track 15', 32, [[A,'slate dim',16,17,''],[A,'slate dim',25,28.4,'K..'],[A,'slate dim',43.2,46.6,'K..'],[A,'rose',61,69,'Pluck..toff'],[A,'rose',69,77,'Pluck..toff'],[A,'rose',77,85,'Pluck..toff'],[A,'slate dim',93,96.4,'K..'],[A,'slate dim',111.2,114.6,'K..']]],
  ['Track 16', 32, [[W,'ash',1,5,'H..'],[W,'ash',5,9,'H..E'],[W,'ash',9,13,'H..'],[W,'ash',13,16.7,'H..'],[A,'slate',25,30.4,'Kick..l'],[A,'slate',43.2,48.6,'Kick..l'],[A,'slate',93,98.4,'Kick..l'],[A,'slate',111.2,116.6,'Kick..l']]],
  ['Track 17', 32, [[A,'rose',61,69,'Pad..cutoff'],[A,'rose',69,77,'Pad..cutoff'],[A,'rose',77,85,'Pad..cutoff'],[A,'rose',85,86.5,'']]],
  ['Track 18', 32, [[A,'olive',1,17,'Param. EQ 2..Band 1 freq','','0,60 100,60'],[A,'olive',17,25,'Para..freq','','0,88 100,88'],[A,'olive',85,93,'Para..freq','','0,88 100,88']]],
  ['Track 19', 32, [[A,'blue',17,69,'New Pluck','','0,62 30,68 85,84 100,60'],[A,'blue',69,85,'New Pluck','','0,5 50,5 50,55 100,60'],[A,'blue',85,125,'New Pluck','','0,62 40,66 100,75']]],
  ['Track 20', 32, [[A,'plum',1,17,'Param. EQ 2 –..nd 1 level','','0,45 100,45']]],
  ['Track 21', 32, [], 'off'],
  ['Track 22', 32, [[A,'rose',17,43,'Future rave #2 – flt-mod cutoff','','0,65 30,45 89,50 93,70 100,50'],[A,'rose',85,111,'Future rave #2 – flt-mod cutoff','','0,65 30,45 89,50 93,70 100,50']]],
  ['Track 23', 32, [[A,'slate',17,69,'FabFilter Volcano 3 (Leads ) – Mix level','','0,6 15,6 15,94 77,94 77,4 100,4'],[A,'slate',69,76.2,'FabFi..vel'],[A,'slate',77,84.2,'FabFi..vel'],[A,'slate',85,125,'FabFilter Volcano 3 (Leads ) – Mix level','','0,6 20,6 20,94 100,94']]],
  ['Track 24', 32, [[A,'rose',17,69,'FabFilter Volcano 3 – Synth 8 – Filter 1 Freq','','0,45 12,28 77,8 84,36 100,36'],[A,'rose',69,77,'FabFi..Freq'],[A,'rose',77,85,'FabFi..Freq'],[A,'rose',85,125,'FabFilter Volcano 3 – Synth 8 – Filter 1 Freq','','0,45 20,28 100,8']]],
  ['Track 25', 78, [...run(P,'gray',[41,45,49,53,109,113,117,121],'S..7','arp'),[P,'gray',57,61.9,'Sy..1','fall'],[P,'rose plain',84.6,85,'','blank']]],
  ['Track 26', 80, [...run(P,'gray',[17,21,25,29,33,37,41,45,49,53,85,89,93,97,101,105,109,113,117,121],'S..8','arp'),[P,'gray',61,68.7,'Synt..#19','roll']]],
  ['Track 27', 32, [[A,'rose dim',16.6,17.2,''],[A,'rose dim',17.2,18,''],[A,'rose',18,69,'FabFilter Volcano 3 – Leads  – Filter 1 Freq','','0,45 10,20 14,28 14,5 77,5 77,38 90,68 100,75'],[A,'rose',69,77,'FabFil..req','','0,75 100,40'],[A,'rose',77,85,'FabFil..req','','0,75 100,40'],[A,'rose',85,125,'FabFilter Volcano 3 – Leads  – Filter 1 Freq','','0,45 15,22 20,30 20,5 100,5']]],
  ['HBAT2_135_Kick_..', 80, [
    ...kicks.map((s, i) => [W,'lilac',s,s+4,(i < 7 ? i % 2 === 1 : s > 120 || (s - 93) % 8 === 0) ? 'H..E' : 'H..','kick']),
    [W,'lilac dim',53,56.5,'H..','kick'],[A,'purple tint plain',61,69,'Leads','ramp'],[A,'orchid tint plain dim',75.9,77,'','rise'],[A,'orchid tint plain dim',83.9,85,'','rise'],
    [W,'pink tint plain',85,89,'D..a','drums'],[W,'pink tint plain dim',89,92,'..','drums'],
    [W,'lilac dim',121,124.5,'H..','kick'],[W,'lilac dim',129,132.5,'H..','kick'],[W,'lilac',137,140.7,'H..','kick']], 'tight'],
  ['Track 29', 80, [
    ...run(P,'gold',[1,5,9],'B..e','bass'),[P,'gold',13,16.7,'B..','bass'],
    ...run(W,'pink plain',[25,29,33,41,45,49,93,97,101,109,113,117,125,133],'F..2','clap'),
    [W,'pink plain',37,40.7,'F..','clap'],[W,'pink plain dim',53,56.5,'F..','clap'],[W,'moss',57,61,'KA..','fade'],
    [W,'brown plain',76.75,77,'','nub'],[W,'brown plain',84.75,85,'','nub'],
    [W,'pink plain',105,108.7,'F..','clap'],[W,'pink plain dim',121,124.5,'F..','clap'],[W,'pink plain dim',129,132.5,'F..','clap'],[W,'pink plain',137,140.7,'F..','clap']]],
  ['Track 30', 80, [
    ...run(P,'gold',[25,29,33,41,45,49,93,97,101,109,113,117,125,129,133],'B..e','bass'),
    [P,'gold',37,40.7,'B..','bass'],[P,'gold',53,56.8,'B..','bass'],[W,'mauve',61,65,'A..3','hit'],
    [P,'gold',105,108.7,'B..','bass'],[P,'gold',121,124.8,'B..','bass'],[P,'gold',137,140.7,'B..','bass']]],
  ['Track 31', 80, [
    [W,'heather plain',9,20,'OPS_FH..F#_150','hum'],
    ...[[33.2,40.8],[41.2,56.5],[101.1,108.8],[109.1,124.5],[125.1,132.5]].map(([a,b]) => ['none','beats plain',a,b,'','hats']),
    ...run(W,'fern plain',[85,87,89],'','loop',2),[W,'fern plain dim',91,92,'','loop'],[W,'mauve dim',141,144,'..','hit']]],
  ['Track 32', 32, [...[[33,40],[49,56.5],[101,108],[117,124.5],[125,132.5]].map(([a,b]) => ['none','greens',a,b,'']),[W,'mauve',139.9,144,'H..1']]]
];

const pct = bars => +(bars / BARS * 100).toFixed(3);

function clipHtml([kind, colour, from, to, label, body, curve]) {
  const len = to - from;
  let line = '';
  if (curve === 'fade') {
    line = '<svg class="curve fade" viewBox="0 0 100 30" preserveAspectRatio="none"><path d="M0 1C45 0 55 29 100 29" fill="none" stroke="currentColor" stroke-width="2"/></svg>';
  } else if (curve) {
    line = `<svg class="curve" viewBox="0 0 100 100" preserveAspectRatio="none"><polyline points="${curve}" fill="none" stroke="currentColor" stroke-width="1" vector-effect="non-scaling-stroke"/></svg>`;
  }
  const icon = kind === 'none' || len < 0.7 ? '' : `<svg class="icon"><use href="#i-${kind}"/></svg>`;
  return `<div class="clip ${kind} ${colour}" style="left:${pct(from - 1)}%;width:${pct(len)}%">` +
    `<div class="clip-head">${line}${icon}${label ? `<span>${label}</span>` : ''}</div>` +
    (body ? `<div class="clip-body">${bodies[body](len)}</div>` : '') + '</div>';
}

document.getElementById('tracks').innerHTML = tracks.map(([name, h, clips, flag = ''], i) => {
  const tall = h > 40;
  return `<div class="track ${h === 74 || h === 78 ? 'short' : ''}" style="height:${h}px">` +
    `<div class="track-head ${tall ? 'tall' : ''} ${flag}"><label for="led${i}">${name}</label>` +
    (tall ? '<div class="more"><i></i><i></i><i></i></div>' : '') +
    (flag === 'tight' ? '<svg class="head-wave" width="32" height="22"><use href="#i-wave"/></svg>' : '') +
    `<input class="led" type="checkbox" id="led${i}" checked></div>` +
    `<div class="lead-in"></div><div class="lane">${clips.map(clipHtml).join('')}</div></div>`;
}).join('');

/* pick the largest label size that fits each clip */
function fitLabels() {
  document.querySelectorAll('.clip').forEach(clip => {
    const head = clip.firstElementChild, span = head.querySelector('span');
    if (!span) return;
    const fits = () => span.offsetLeft + span.offsetWidth <= head.clientWidth + 1;
    for (const size of ['wide', 'medium', 'base', 'narrow']) {
      clip.classList.remove('wide', 'medium', 'base', 'narrow');
      clip.classList.add(size);
      if (fits()) return;
    }
  });
}
fitLabels();
window.addEventListener('resize', fitLabels);

/* ---- ruler ---- */
let marks = '';
for (let b = 1; b < BARS; b += 4) marks += `<span style="left:${pct(b - 1)}%">${b}</span>`;
document.getElementById('ruler').innerHTML = marks +
  '<svg class="playhead" viewBox="0 0 18 18"><path d="M0 1H16L1 18H0Z" fill="#bfe66a" stroke="#e9ffb0" stroke-width="1"/></svg>';

/* ---- overview: [x, y, length, thickness, colour] ---- */
const pu = '#85709f', gr = '#6f9c7c', bl = '#5569a0', ro = '#a06a8a', go = '#8f8652', br = '#9c7f72', gy = '#7d898e', ol = '#7f8f78';
const map = [
  [2,7,106,2,pu],[2,8,216,1,go],[108,5,109,1,gr],[108,7,109,2,pu],[2,13,106,2,go],[2,15,106,1,pu],[108,12,109,1,go],[108,14,109,3,pu],[96,17,100,1,ro],[2,22,95,1,br],[108,22,100,1,pu],[108,28,109,2,br],[2,30,26,1,pu],[205,18,54,1,ro],
  [219,0,95,1,gy],[219,5,110,1,gr],[219,7,476,2,pu],[219,8,476,1,bl],[219,10,476,3,ro],[219,13,476,1,pu],[219,25,95,3,ol],[219,28,110,2,br],[219,30,110,1,ro],[330,13,200,2,go],[330,17,160,1,br],[330,21,120,1,go],[330,29,100,1,bl],[440,17,200,1,pu],[450,24,200,1,bl],[540,29,150,1,pu],[560,14,180,2,go],
  [766,0,383,2,pu],[766,2,55,1,br],[821,2,220,1,bl],[1040,2,109,1,ro],[795,4,27,2,pu],[1150,0,95,1,gy],[1095,2,106,1,ol],[1150,4,12,1,gr],
  [695,5,454,1,gr],[695,7,454,2,pu],[821,7,328,2,ro],[695,8,454,1,bl],[695,11,454,2,pu],[930,11,219,2,ro],[1150,10,390,3,ro],[1260,5,448,1,gr],[1150,6,640,1,pu],[1150,8,640,2,bl],
  [695,13,66,2,go],[739,15,190,2,br],[766,13,55,1,br],[930,16,72,1,ro],[1027,13,12,1,ro],[1135,15,14,2,ro],[1150,14,95,1,ol],[1260,14,109,2,go],[1369,14,130,2,go],[1260,17,119,1,ol],[739,19,410,1,ro],[821,20,27,1,gr],[739,23,80,2,pu],[821,24,109,1,br],[766,26,90,1,ro],[1013,27,26,3,br],[1122,27,27,3,br],[1150,25,88,2,ol],[1150,27,95,2,br],
  [695,28,100,2,bl],[821,30,220,1,ro],[766,31,260,2,ro],[821,33,109,1,br],[1041,30,219,2,ro],[1150,31,109,2,ro],[1245,29,270,1,bl],[1369,21,340,1,pu],[1369,25,130,2,ro],[695,31,1000,1,ro],
  [1500,7,290,1,bl],[1500,14,200,2,go],[1500,16,220,1,ol],[1580,29,130,2,ol],
  [1705,14,48,2,br],[1753,13,47,2,go],[1753,15,47,2,ro],[1807,13,105,2,go],[1807,15,151,2,br],[1917,14,41,2,ro],[1705,30,102,1,pu],[1807,30,29,1,pu],[1862,30,30,1,pu],[1917,30,29,1,pu]
];
document.getElementById('minimap').innerHTML = map.map(([x, y, w, h, c]) => `<rect x="${x}" y="${y}" width="${w}" height="${h}" fill="${c}"/>`).join('');
```
